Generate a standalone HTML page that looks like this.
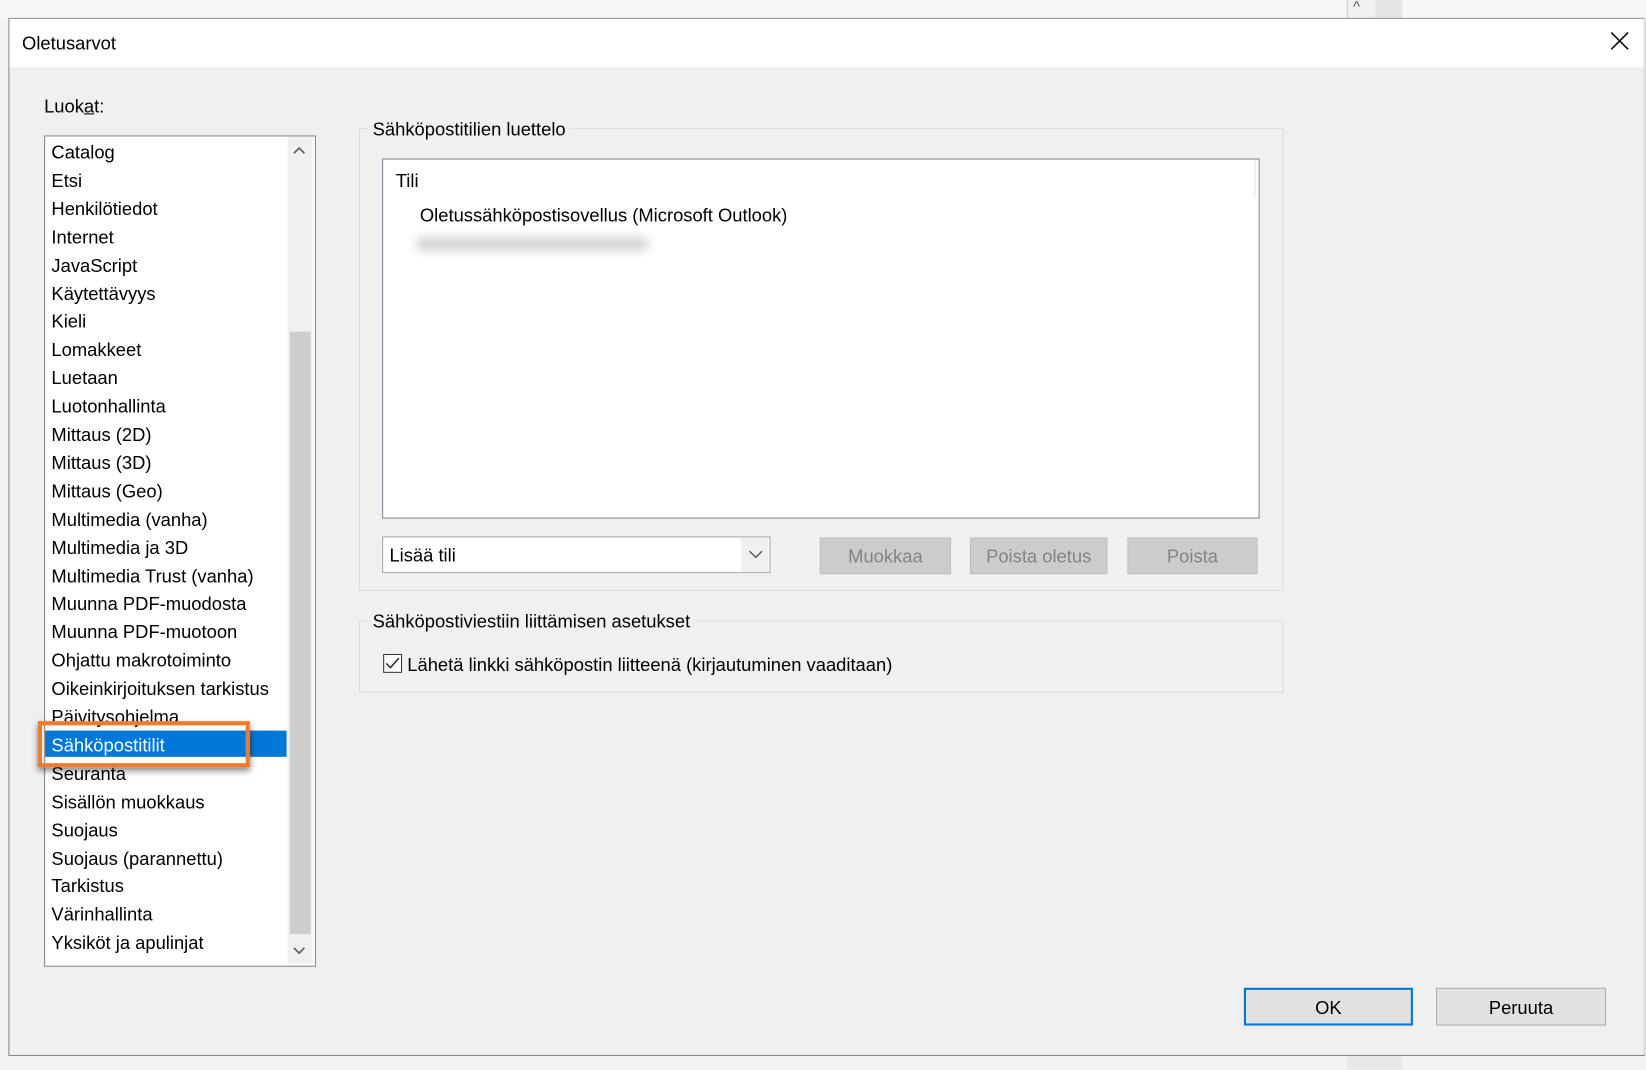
<!DOCTYPE html>
<html><head><meta charset="utf-8"><style>
html,body{margin:0;padding:0;width:1646px;height:1070px;overflow:hidden;background:#f3f3f3}
#w{position:absolute;left:0;top:0;width:1568px;height:1019px;transform:scale(1.0497);transform-origin:0 0;font-family:"Liberation Sans",sans-serif;font-size:17.5px;color:#000}
.a{position:absolute}
.t{position:absolute;white-space:nowrap;line-height:20px}
.grp{position:absolute;border:1px solid #dcdcdc}
.btn{position:absolute;background:#cccccc;border:1px solid #bfbfbf;color:#838383;text-align:center;box-sizing:border-box}
</style></head><body><div id="w">
<div class="a" style="left:0;top:0;width:1568px;height:17px;background:#f7f7f7"></div>
<div class="a" style="left:1283px;top:0;width:26px;height:17px;background:#f0f0f0;border-left:1px solid #ccc"></div>
<div class="t" style="left:1289px;top:-4px;font-size:14px;color:#555">^</div>
<div class="a" style="left:1310px;top:0;width:26px;height:17px;background:#e6e6e6"></div>
<div class="a" style="left:1283px;top:1005px;width:53px;height:14px;background:#e8e8e8"></div>
<div class="a" style="left:8px;top:17px;width:1557px;height:987px;background:#f0f0f0;border:1px solid #8a8a8a"></div>
<div class="a" style="left:9px;top:18px;width:1557px;height:46px;background:#fff"></div>
<div class="t" style="left:21px;top:31px">Oletusarvot</div>
<svg class="a" style="left:1534px;top:30px" width="18" height="18"><path d="M1 1L17 17M17 1L1 17" stroke="#111" stroke-width="1.6"/></svg>
<div class="t" style="left:42px;top:91px">Luok<u>a</u>t:</div>
<div class="a" style="left:42px;top:129px;width:257px;height:790px;background:#fff;border:1px solid #828790"></div>
<div class="a" style="left:274px;top:130px;width:24px;height:788px;background:#f0f0f0"></div>
<div class="a" style="left:276px;top:316px;width:20px;height:574px;background:#cdcdcd"></div>
<svg class="a" style="left:279px;top:139px" width="12" height="9"><path d="M1 7L6 2L11 7" fill="none" stroke="#606060" stroke-width="1.6"/></svg>
<svg class="a" style="left:279px;top:901px" width="12" height="9"><path d="M1 2L6 7L11 2" fill="none" stroke="#606060" stroke-width="1.6"/></svg>
<div class="a" style="left:43px;top:696px;width:230px;height:25px;background:#0078d7"></div>
<div id="list"></div>
<div class="a" style="left:36px;top:687px;width:194px;height:36px;border:4px solid #f07b2e;box-shadow:0 3px 6px rgba(0,0,0,.5)"></div>
<div class="grp" style="left:342px;top:122px;width:879px;height:439px"></div>
<div class="t" style="left:351px;top:113px;background:#f0f0f0;padding:0 4px">Sähköpostitilien luettelo</div>
<div class="a" style="left:364px;top:151px;width:834px;height:341px;background:#fff;border:1px solid #828790"></div>
<div class="a" style="left:1195px;top:152px;width:1px;height:36px;background:#e5e5e5"></div>
<div class="t" style="left:377px;top:162px">Tili</div>
<div class="t" style="left:400px;top:195px">Oletussähköpostisovellus (Microsoft Outlook)</div>
<div class="a" style="left:396px;top:225px;width:222px;height:15px;background:#d8d8d8;border-radius:8px;filter:blur(4px)"></div>
<div class="a" style="left:364px;top:511px;width:368px;height:33px;background:#fff;border:1px solid #a8a8a8"></div>
<div class="a" style="left:706px;top:512px;width:26px;height:33px;background:#f0f0f0"></div>
<svg class="a" style="left:713px;top:523px" width="14" height="10"><path d="M1 2L7 8L13 2" fill="none" stroke="#555" stroke-width="1.3"/></svg>
<div class="t" style="left:371px;top:519px">Lisää tili</div>
<div class="btn" style="left:781px;top:512px;width:125px;height:35px;line-height:34px">Muokkaa</div>
<div class="btn" style="left:924px;top:512px;width:131px;height:35px;line-height:34px">Poista oletus</div>
<div class="btn" style="left:1074px;top:512px;width:124px;height:35px;line-height:34px">Poista</div>
<div class="grp" style="left:342px;top:591px;width:879px;height:67px"></div>
<div class="t" style="left:351px;top:582px;background:#f0f0f0;padding:0 4px">Sähköpostiviestiin liittämisen asetukset</div>
<div class="a" style="left:365px;top:623px;width:16px;height:16px;background:#fff;border:1px solid #333"></div>
<svg class="a" style="left:367px;top:626px" width="14" height="12"><path d="M1 6L5 10L13 1" fill="none" stroke="#222" stroke-width="1.4"/></svg>
<div class="t" style="left:388px;top:623px">Lähetä linkki sähköpostin liitteenä (kirjautuminen vaaditaan)</div>
<div class="a" style="left:1185px;top:941px;width:157px;height:32px;background:#e1e1e1;border:2px solid #0078d7;text-align:center;line-height:34px">OK</div>
<div class="a" style="left:1368px;top:941px;width:160px;height:34px;background:#e1e1e1;border:1px solid #adadad;text-align:center;line-height:36px">Peruuta</div>
<div class="a" style="left:1566px;top:17px;width:2px;height:988px;background:#ddd"></div>
</div>
<script>
var items=["Catalog","Etsi","Henkilötiedot","Internet","JavaScript","Käytettävyys","Kieli","Lomakkeet","Luetaan","Luotonhallinta","Mittaus (2D)","Mittaus (3D)","Mittaus (Geo)","Multimedia (vanha)","Multimedia ja 3D","Multimedia Trust (vanha)","Muunna PDF-muodosta","Muunna PDF-muotoon","Ohjattu makrotoiminto","Oikeinkirjoituksen tarkistus","Päivitysohjelma","Sähköpostitilit","Seuranta","Sisällön muokkaus","Suojaus","Suojaus (parannettu)","Tarkistus","Värinhallinta","Yksiköt ja apulinjat"];
var h="";items.forEach(function(s,i){h+='<div class="t" style="left:49px;top:'+(135+i*26.9)+'px;'+(i==21?'color:#fff':'')+'">'+s+'</div>';});
document.getElementById("list").outerHTML=h;
</script>
</body></html>
